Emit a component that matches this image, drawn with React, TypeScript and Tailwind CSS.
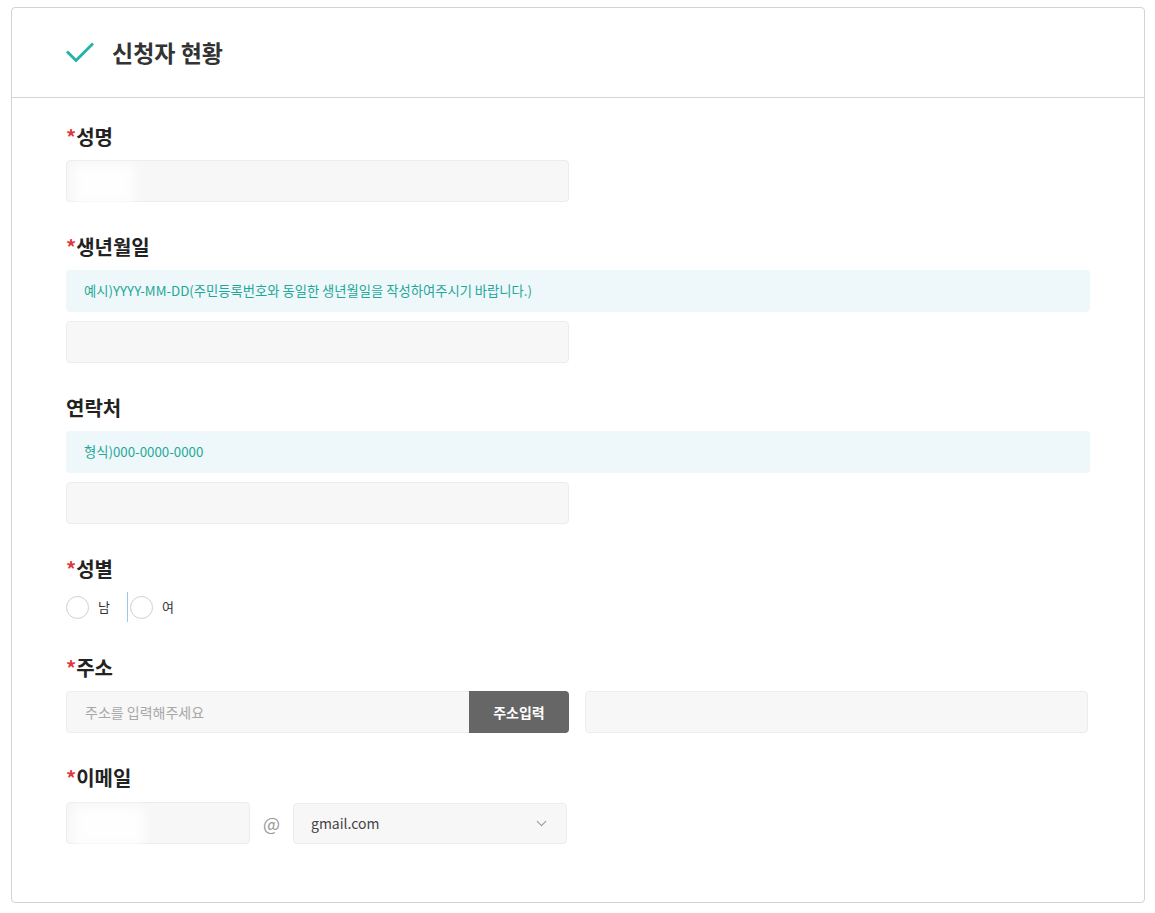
import { ChevronDown } from "lucide-react";

const font = { fontFamily: '"Noto Sans CJK KR", "Noto Sans", sans-serif' };

const Label = ({ text, required, mb = "mb-[10px]" }: { text: string; required?: boolean; mb?: string }) => (
  <div className={"text-[20px] leading-[26px] font-bold text-[#222] " + mb}>
    {required && <span className="text-[#e0383e]">*</span>}
    {text}
  </div>
);

const Hint = ({ text }: { text: string }) => (
  <div className="h-[42px] w-[1024px] rounded-[4px] bg-[#eef7f9] flex items-center pl-[18px] text-[13.3px] text-[#1fa89a] mb-[9px]">
    {text}
  </div>
);

const Blur = ({ w }: { w: number }) => (
  <div
    className="absolute left-[6px] top-[3px] bottom-[-4px] bg-white/80 blur-[5px] rounded-md"
    style={{ width: w }}
  />
);

const Input = ({ className, blur }: { className: string; blur?: number }) => (
  <div
    className={
      "relative h-[42px] rounded-[4px] bg-[#f7f7f7] border border-[#ececec] " +
      className
    }
  >
    {blur && <Blur w={blur} />}
  </div>
);

const Radio = ({ label }: { label: string }) => (
  <label className="flex items-center gap-[9px]">
    <span className="w-[23px] h-[23px] rounded-full border border-[#cfcfcf] bg-white" />
    <span className="text-[13px] text-[#333]">{label}</span>
  </label>
);

export default function App() {
  return (
    <div className="bg-white min-h-[913px] pt-[7px] px-[11px]" style={font}>
      <div className="w-[1134px] h-[896px] border border-[#d3d3d3] rounded-[4px] bg-white">
        <div className="h-[90px] border-b border-[#d6d6d6] flex items-center pl-[54px] gap-[18px]">
          <svg width="28" height="22" viewBox="0 0 28 22" fill="none">
            <path
              d="M2 10.5 L10 18.5 L26 2.5"
              stroke="#26b3a6"
              strokeWidth="3"
              strokeLinecap="square"
            />
          </svg>
          <h2 className="text-[23px] font-bold text-[#333] mb-[1px]">
            신청자 현황
          </h2>
        </div>

        <div className="pl-[54px] pt-[26px] flex flex-col gap-[32px]">
          <section>
            <Label text="성명" required />
            <Input className="w-[503px]" blur={62} />
          </section>

          <section>
            <Label text="생년월일" required />
            <Hint text="예시)YYYY-MM-DD(주민등록번호와 동일한 생년월일을 작성하여주시기 바랍니다.)" />
            <Input className="w-[503px]" />
          </section>

          <section>
            <Label text="연락처" />
            <Hint text="형식)000-0000-0000" />
            <Input className="w-[503px]" />
          </section>

          <section>
            <Label text="성별" required />
            <div className="flex items-center h-[30px] mb-[1px]">
              <Radio label="남" />
              <span className="w-px h-[30px] bg-[#9fc6ec] ml-[17px] mr-[2px]" />
              <Radio label="여" />
            </div>
          </section>

          <section>
            <Label text="주소" required />
            <div className="flex items-center gap-[16px]">
              <div className="flex w-[503px] h-[42px]">
                <div className="flex-1 h-full rounded-l-[4px] bg-[#f7f7f7] border border-r-0 border-[#ececec] flex items-center pl-[18px] text-[14px] text-[#a8a8a8]">
                  주소를 입력해주세요
                </div>
                <button className="w-[100px] h-full rounded-r-[4px] bg-[#666666] text-white text-[14px] font-bold">
                  주소입력
                </button>
              </div>
              <Input className="w-[503px]" />
            </div>
          </section>

          <section>
            <Label text="이메일" required mb="mb-[11px]" />
            <div className="flex items-center">
              <Input className="w-[184px]" blur={72} />
              <span className="w-[43px] text-center text-[18px] text-[#999]">@</span>
              <div className="w-[274px] h-[41px] rounded-[4px] bg-[#f7f7f7] border border-[#ececec] flex items-center justify-between pl-[17px] pr-[16px] text-[14px] text-[#444]">
                <span>gmail.com</span>
                <ChevronDown size={17} strokeWidth={1.5} color="#999" />
              </div>
            </div>
          </section>
        </div>
      </div>
    </div>
  );
}
